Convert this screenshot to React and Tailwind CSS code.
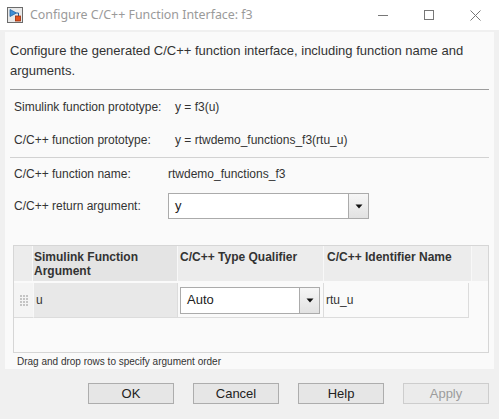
import React from "react";

function WinIcon() {
  return (
    <svg width="16" height="16" viewBox="0 0 16 16" className="shrink-0">
      <rect x="0.5" y="0.5" width="15" height="15" fill="#e9e9e9" stroke="#6b6b6b" />
      <path d="M3 2.5 L9.5 6 L3 9.5 Z" fill="#3d8fd6" stroke="#1f5fa0" strokeWidth="0.8" />
      <path d="M9.5 6 H11.5 V9" fill="none" stroke="#1f5fa0" strokeWidth="1" />
      <rect x="8.5" y="9" width="5" height="5" fill="#e0521e" stroke="#9a2c08" strokeWidth="0.8" />
    </svg>
  );
}

function Caret() {
  return (
    <svg width="8" height="5" viewBox="0 0 8 5">
      <path d="M0.5 0.5 H7.5 L4 4.5 Z" fill="#111" />
    </svg>
  );
}

function Combo({ value, className }) {
  return (
    <div className={"flex bg-white border border-[#ababab] " + className}>
      <div className="flex-1 flex items-center pl-[6px] text-[13px] text-[#222]">{value}</div>
      <div className="w-[20px] border-l border-[#ababab] bg-gradient-to-b from-[#f6f6f6] to-[#e2e2e2] flex items-center justify-center">
        <Caret />
      </div>
    </div>
  );
}

function Dots() {
  const dots = [];
  for (let r = 0; r < 4; r++) for (let c = 0; c < 3; c++) dots.push(<rect key={r + "-" + c} x={c * 3} y={r * 3} width="2" height="2" fill="#c4c4c4" />);
  return (
    <svg width="8" height="11" viewBox="0 0 8 11">
      {dots}
    </svg>
  );
}

function Btn({ children, disabled }) {
  return (
    <div
      className={
        "w-[86px] h-[21px] flex items-center justify-center text-[13px] border " +
        (disabled ? "border-[#cdcdcd] bg-[#ebebeb] text-[#9c9c9c]" : "border-[#adadad] bg-[#e6e6e6] text-[#222]")
      }
    >
      {children}
    </div>
  );
}

export default function App() {
  return (
    <div className="w-[499px] h-[419px] bg-white flex flex-col overflow-hidden" style={{ fontFamily: '"Liberation Sans", Arial, sans-serif' }}>
      {/* Title bar */}
      <div className="h-[30px] flex items-center shrink-0">
        <div className="pl-[7px] pr-[7px] flex items-center">
          <WinIcon />
        </div>
        <div className="text-[12.4px] text-[#9a9a9a] leading-none" style={{ fontFamily: '"Noto Sans", "Open Sans", sans-serif' }}>
          Configure C/C++ Function Interface: f3
        </div>
        <div className="flex-1" />
        <div className="flex items-center h-full pr-[1px]">
          <div className="w-[46px] h-full flex items-center justify-center">
            <div className="w-[10px] h-px bg-[#777]" />
          </div>
          <div className="w-[46px] h-full flex items-center justify-center">
            <div className="w-[10px] h-[10px] border border-[#777]" />
          </div>
          <div className="w-[46px] h-full flex items-center justify-center">
            <svg width="11" height="11" viewBox="0 0 11 11">
              <path d="M0.5 0.5 L10.5 10.5 M10.5 0.5 L0.5 10.5" stroke="#777" strokeWidth="1" />
            </svg>
          </div>
        </div>
      </div>

      {/* Body */}
      <div className="flex-1 bg-[#f0f0f0] pt-[2px] px-[5px] flex flex-col">
        <div className="bg-[#fafafa] h-[337px] flex flex-col text-[#333]">
          <div className="pt-[9px] px-[5px] text-[13px] leading-[20px] text-[#333]">
            Configure the generated C/C++ function interface, including function name and arguments.
          </div>
          <div className="mt-[8px] mx-[5px] h-px bg-[#9c9c9c]" />
          <div className="h-[33px] flex items-center pl-[9px] text-[12px]">
            <div className="w-[161px]">Simulink function prototype:</div>
            <div>y = f3(u)</div>
          </div>
          <div className="h-[34px] flex items-center pl-[9px] text-[12px]">
            <div className="w-[161px]">C/C++ function prototype:</div>
            <div>y = rtwdemo_functions_f3(rtu_u)</div>
          </div>
          <div className="mx-[5px] h-px bg-[#d2d2d2]" />
          <div className="h-[31px] flex items-center pl-[9px] text-[12px]">
            <div className="w-[154px]">C/C++ function name:</div>
            <div>rtwdemo_functions_f3</div>
          </div>
          <div className="flex items-center pl-[9px] text-[12px] pt-[4px]">
            <div className="w-[154px]">C/C++ return argument:</div>
            <Combo value="y" className="w-[201px] h-[26px]" />
          </div>

          {/* Table */}
          <div className="mt-[26px] ml-[8px] w-[476px] h-[108px] border border-[#d6d6d6] bg-[#fafafa] flex flex-col">
            <div className="grid grid-cols-[19px_145px_146px_148px_1fr] h-[35px] text-[12px] font-bold text-[#333] leading-[14px]">
              <div className="bg-[#ececec] border-r border-[#f8f8f8]" />
              <div className="bg-[#e4e4e4] border-r border-[#f8f8f8] pl-[1px] pt-[4px]">
                Simulink Function
                <br />
                Argument
              </div>
              <div className="bg-[#ececec] border-r border-[#f8f8f8] pl-[2px] pt-[4px]">C/C++ Type Qualifier</div>
              <div className="bg-[#ececec] border-r border-[#f8f8f8] pl-[3px] pt-[4px]">C/C++ Identifier Name</div>
              <div className="bg-[#f0f0f0]" />
            </div>
            <div className="grid grid-cols-[19px_145px_146px_145px_1fr] h-[35px] mt-[2px] text-[12px] text-[#333]">
              <div className="bg-[#f4f4f4] border-b border-[#dcdcdc] flex items-center justify-center">
                <Dots />
              </div>
              <div className="bg-[#e8e8e8] border-b border-r border-[#dcdcdc] border-l border-l-[#f8f8f8] flex items-center pl-[2px]">u</div>
              <div className="border-b border-r border-[#dcdcdc] flex items-center pl-[2px]">
                <Combo value="Auto" className="w-[140px] h-[27px]" />
              </div>
              <div className="border-b border-r border-[#dcdcdc] flex items-center pl-[2px]">rtu_u</div>
              <div />
            </div>
          </div>
          <div className="pl-[12px] pt-[3px] text-[10px] leading-[12px] text-[#333]">Drag and drop rows to specify argument order</div>
        </div>

        <div className="mt-[14px] flex justify-end gap-[19px] pr-[5px]">
          <Btn>OK</Btn>
          <Btn>Cancel</Btn>
          <Btn>Help</Btn>
          <Btn disabled>Apply</Btn>
        </div>
      </div>
    </div>
  );
}
